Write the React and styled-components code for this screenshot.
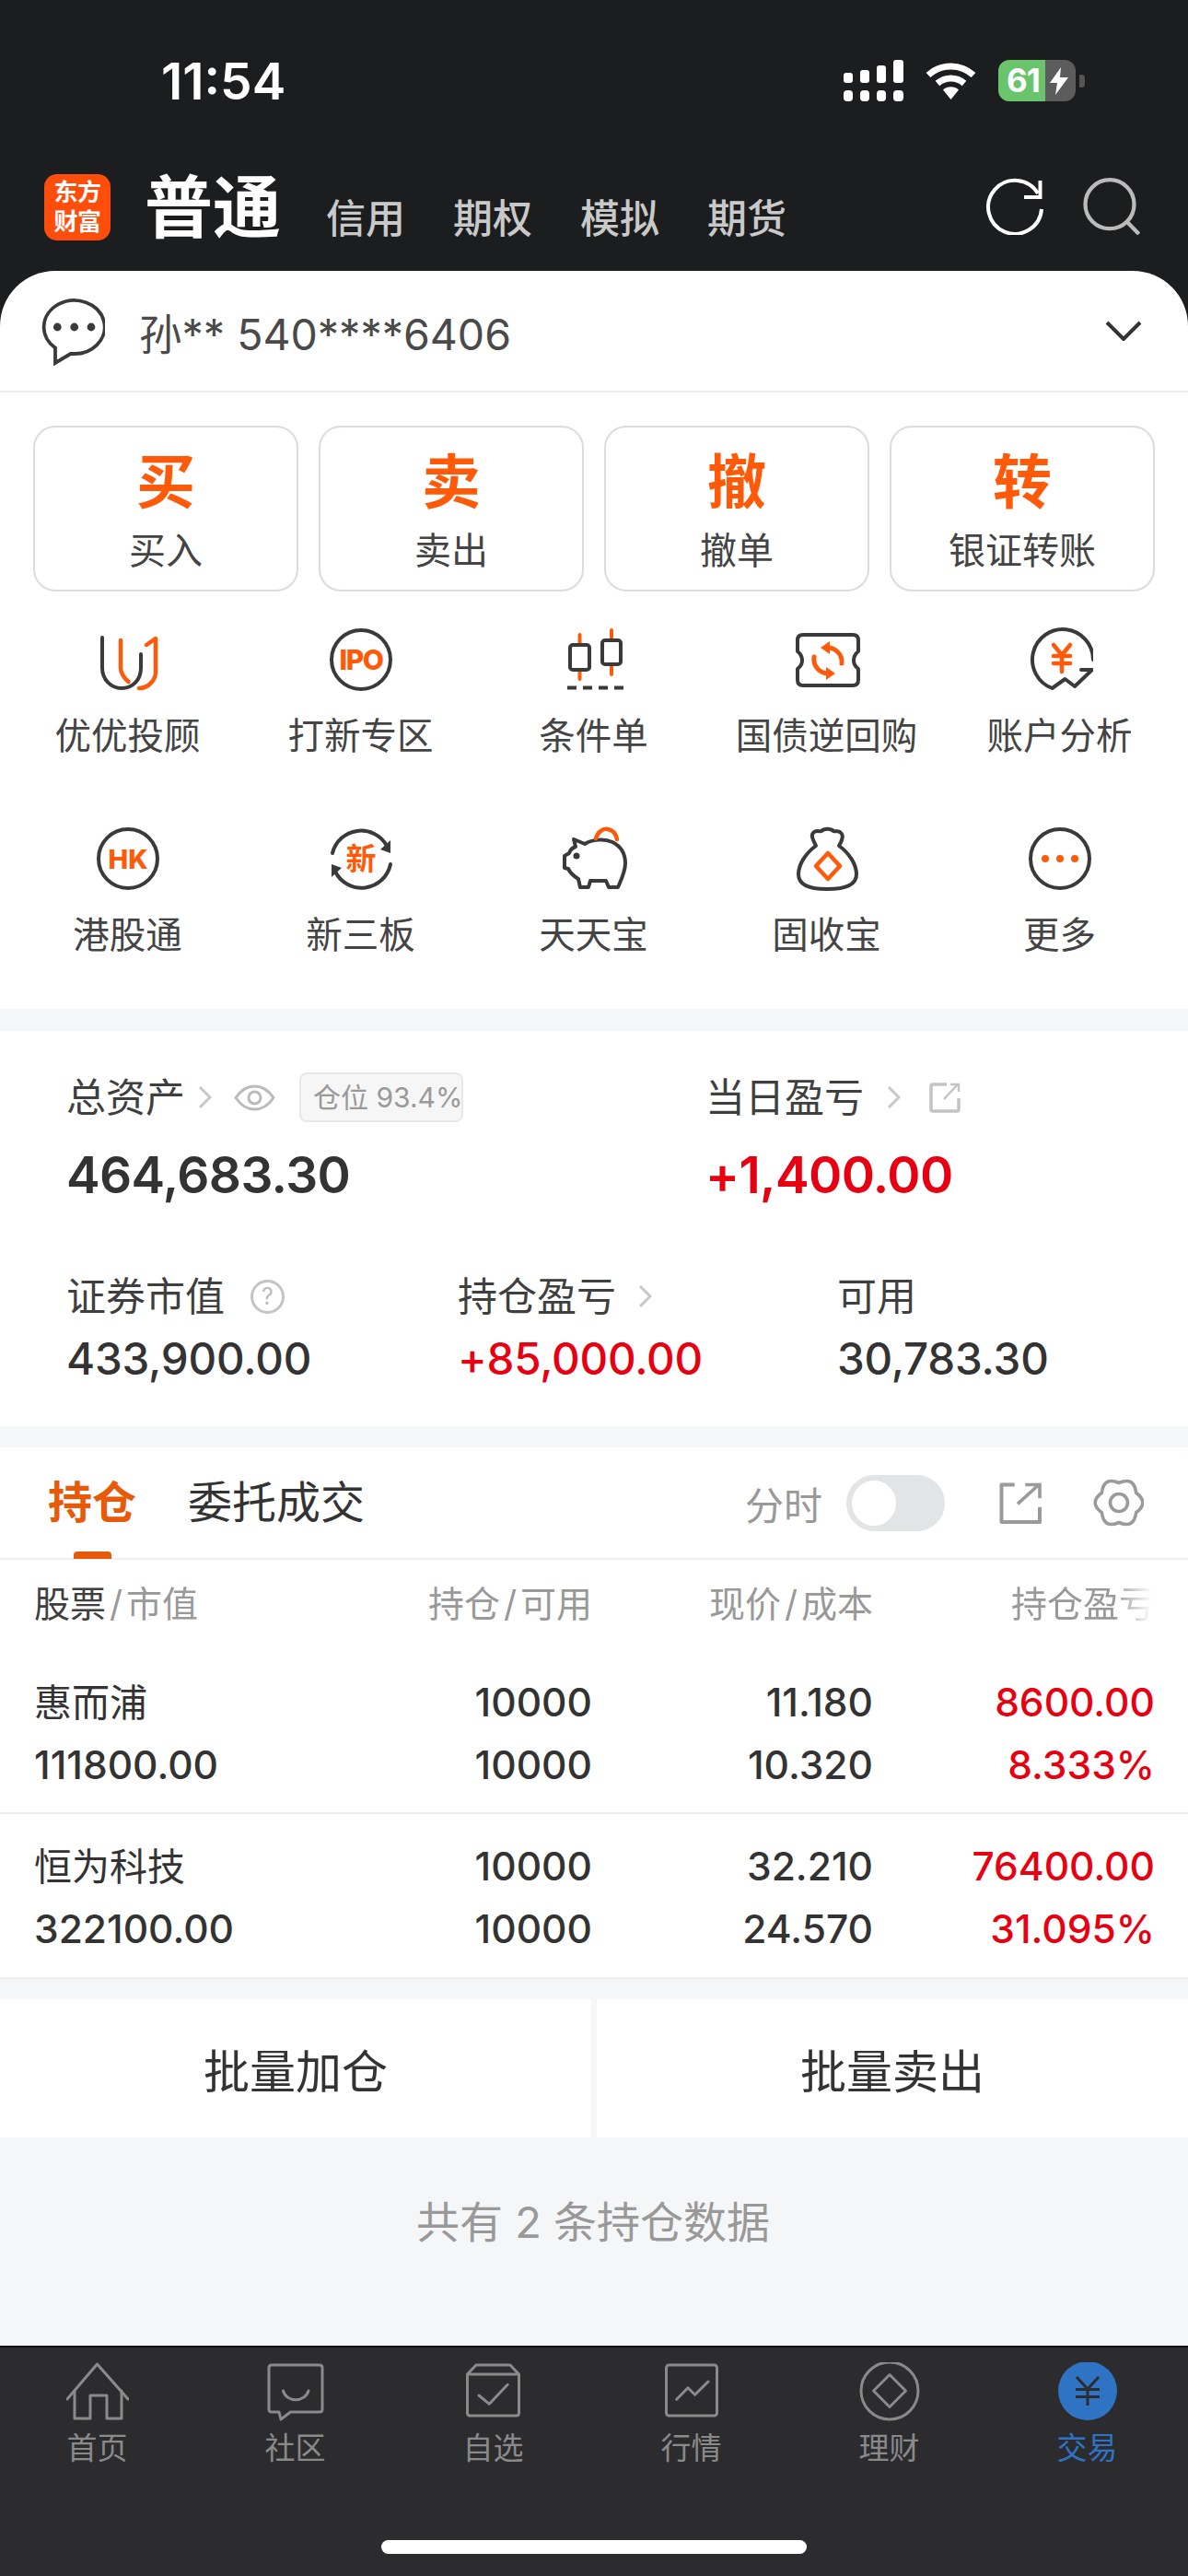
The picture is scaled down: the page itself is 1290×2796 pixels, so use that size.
import React from "react";
import styled, { createGlobalStyle } from "styled-components";

const FONT = `Inter, "Noto Sans CJK SC", "Noto Sans", sans-serif`;
const DARK = "#3a3a3a";
const ORANGE = "#ff5a0a";
const RED = "#e60012";

const Global = createGlobalStyle`
  html, body { margin: 0; padding: 0; background: #f5f6f8; }
  * { box-sizing: border-box; }
  body { font-family: ${FONT}; color: #333; }
`;

const Page = styled.div`
  width: 1290px;
  height: 2796px;
  overflow: hidden;
  display: flex;
  flex-direction: column;
  background: #f5f6f8;
`;

const Top = styled.header`
  background: #1c1d1f;
  height: 294px;
  flex: none;
`;
const StatusBar = styled.div`
  height: 175px;
  display: flex;
  align-items: center;
  justify-content: space-between;
  padding: 0 112px 0 175px;
`;
const Clock = styled.span`
  font-size: 55px;
  font-weight: 600;
  color: #fff;
`;
const StatusIcons = styled.div`
  display: flex;
  align-items: center;
  gap: 23px;
`;
const Battery = styled.div`
  display: flex;
  width: 84px;
  height: 45px;
  border-radius: 12px;
  overflow: hidden;
`;
const BatteryFill = styled.div`
  width: 51px;
  background: #69c46c;
  color: #fff;
  font-size: 35px;
  font-weight: 700;
  line-height: 45px;
  padding-left: 9px;
  letter-spacing: -1px;
`;
const BatteryRest = styled.div`
  flex: 1;
  background: #5c5c5c;
  display: flex;
  align-items: center;
  padding-left: 5px;
`;
const BatteryWrap = styled.div`
  display: flex;
  align-items: center;
  gap: 4px;
`;
const BatteryCap = styled.div`
  width: 6px;
  height: 14px;
  border-radius: 0 4px 4px 0;
  background: #555;
`;

const Nav = styled.nav`
  height: 119px;
  display: flex;
  align-items: flex-start;
  padding: 14px 52px 0 48px;
`;
const Logo = styled.div`
  width: 72px;
  height: 72px;
  border-radius: 14px;
  background: #ff4e0c;
  color: #fff;
  font-size: 26px;
  font-weight: 700;
  line-height: 32px;
  letter-spacing: -0.5px;
  text-align: center;
  padding-top: 4px;
`;
const NavMain = styled.div`
  margin-left: 37px;
  font-size: 74px;
  font-weight: 700;
  line-height: 72px;
  color: #fff;
`;
const NavTabs = styled.div`
  display: flex;
  gap: 52px;
  margin-left: 49px;
  margin-top: 24px;
`;
const NavTab = styled.span`
  font-size: 43px;
  font-weight: 500;
  line-height: 48px;
  color: #c9c9c9;
`;
const NavActions = styled.div`
  margin-left: auto;
  display: flex;
  align-items: center;
  gap: 43px;
  margin-top: 4px;
`;

const AccountWrap = styled.div`
  background: #1c1d1f;
  flex: none;
`;
const Account = styled.div`
  height: 132px;
  background: #fff;
  border-radius: 60px 60px 0 0;
  border-bottom: 2px solid #ebebeb;
  display: flex;
  align-items: center;
  padding: 0 50px 0 42px;
`;
const AccountText = styled.span`
  margin-left: 37px;
  font-size: 46.5px;
  color: #4a4a4a;
  flex: 1;
`;

const Quick = styled.section`
  background: #fff;
  padding: 36px 36px 0;
  display: grid;
  grid-template-columns: repeat(4, 288px);
  gap: 22px;
  flex: none;
`;
const TradeButton = styled.div`
  height: 180px;
  border: 2px solid #dcdcdc;
  border-radius: 24px;
  display: flex;
  flex-direction: column;
  align-items: center;
  padding-top: 24px;
`;
const TradeChar = styled.div`
  font-size: 64px;
  font-weight: 700;
  line-height: 70px;
  color: ${ORANGE};
`;
const TradeLabel = styled.div`
  margin-top: 16px;
  font-size: 40px;
  line-height: 48px;
  color: #444;
`;

const Tools = styled.section`
  background: #fff;
  padding: 38px 12.5px 54px;
  display: grid;
  grid-template-columns: repeat(5, 253px);
  row-gap: 71px;
  flex: none;
`;
const Tool = styled.div`
  display: flex;
  flex-direction: column;
  align-items: center;
`;
const ToolLabel = styled.div`
  margin-top: 21px;
  margin-left: -1px;
  font-size: 39.5px;
  line-height: 52px;
  color: #444;
  white-space: nowrap;
`;

const Assets = styled.section`
  margin-top: 24px;
  background: #fff;
  padding: 44px 0 45px 72px;
  flex: none;
  height: 429px;
`;
const AssetRow = styled.div`
  display: grid;
  grid-template-columns: ${(p) => p.$cols};
  margin-top: ${(p) => p.$top || 0}px;
`;
const AssetLabel = styled.div`
  height: 56px;
  display: flex;
  align-items: center;
  font-size: 43px;
  line-height: 56px;
  color: #3f3f3f;
`;
const AssetValue = styled.div`
  font-size: ${(p) => (p.$large ? 55 : 47.5)}px;
  font-weight: ${(p) => (p.$large ? 600 : 500)};
  line-height: ${(p) => (p.$large ? 64 : 56)}px;
  margin-top: ${(p) => (p.$large ? 24 : 12)}px;
  color: ${(p) => (p.$up ? RED : "#333")};
  letter-spacing: ${(p) => (p.$large ? -0.6 : -0.2)}px;
`;
const PositionBadge = styled.span`
  margin-left: 26px;
  width: 178px;
  height: 54px;
  background: #f6f6f6;
  border: 2px solid #e8e8e8;
  border-radius: 8px;
  font-size: 30px;
  line-height: 50px;
  color: #999;
  padding-left: 13px;
  white-space: nowrap;
  overflow: hidden;
`;
const QuestionMark = styled.span`
  margin-left: 28px;
  width: 37px;
  height: 37px;
  border: 3px solid #c4c4c4;
  border-radius: 50%;
  color: #bbb;
  font-size: 25px;
  line-height: 31px;
  text-align: center;
`;
const Gap = styled.span`
  display: inline-flex;
  margin-left: ${(p) => p.$l}px;
`;

const Holdings = styled.section`
  margin-top: 23px;
  background: #fff;
  flex: none;
`;
const TabsBar = styled.div`
  height: 122px;
  border-bottom: 2px solid #eee;
  display: flex;
  align-items: center;
  padding: 0 48px 0 52px;
`;
const HoldTab = styled.div`
  position: relative;
  font-size: 48px;
  line-height: 60px;
  font-weight: ${(p) => (p.$active ? 700 : 400)};
  color: ${(p) => (p.$active ? "#e65a0a" : "#333")};
  margin-right: 56px;
  ${(p) =>
    p.$active &&
    `&::after {
      content: "";
      position: absolute;
      left: 28px;
      bottom: -31px;
      width: 41px;
      height: 8px;
      border-radius: 4px 4px 0 0;
      background: #e65a0a;
    }`}
`;
const TabsRight = styled.div`
  margin-left: auto;
  display: flex;
  align-items: center;
`;
const Faint = styled.span`
  font-size: 42px;
  color: #999;
`;
const Toggle = styled.div`
  margin-left: 26px;
  width: 107px;
  height: 61px;
  border-radius: 31px;
  background: #e3e4e6;
  padding: 6px;
`;
const Knob = styled.div`
  width: 48px;
  height: 49px;
  border-radius: 50%;
  background: #fff;
`;

const TableGrid = styled.div`
  display: grid;
  grid-template-columns: 306px 300px 305px 306px;
  padding: 0 36px 0 37px;
`;
const TableHead = styled(TableGrid)`
  height: 90px;
  align-items: center;
  font-size: 39px;
  color: #999;
`;
const HeadCell = styled.div`
  text-align: ${(p) => (p.$left ? "left" : "right")};
  white-space: nowrap;
  & > b { font-weight: 400; color: #3f3f3f; }
`;
const Slash = styled.span`
  margin: 0 4px;
`;
const FadeText = styled.span`
  display: inline-block;
  -webkit-mask-image: linear-gradient(to right, #000 72%, transparent 98%);
  mask-image: linear-gradient(to right, #000 72%, transparent 98%);
`;
const StockRow = styled(TableGrid)`
  padding-top: ${(p) => p.$pt}px;
  padding-bottom: ${(p) => p.$pb}px;
  border-bottom: 2px solid #eee;
`;
const Cell = styled.div`
  height: 68px;
  line-height: 68px;
  font-size: ${(p) => (p.$name ? 41 : 42.5)}px;
  font-weight: ${(p) => (p.$name ? 400 : 500)};
  text-align: ${(p) => (p.$left ? "left" : "right")};
  color: ${(p) => (p.$up ? RED : "#333")};
  white-space: nowrap;
`;

const Batch = styled.div`
  margin-top: 22px;
  display: flex;
  gap: 6px;
  flex: none;
`;
const BatchButton = styled.div`
  flex: 1;
  height: 150px;
  background: #fff;
  display: flex;
  align-items: center;
  justify-content: center;
  font-size: 50px;
  color: #333;
`;
const FooterNote = styled.div`
  flex: 1;
  padding-top: 62px;
  padding-right: 2px;
  text-align: center;
  font-size: 47px;
  line-height: 60px;
  color: #999;
`;

const TabBar = styled.footer`
  height: 250px;
  flex: none;
  background: #2c2c2e;
  border-top: 2px solid #111;
  display: flex;
  flex-direction: column;
  padding-top: 16px;
`;
const TabGrid = styled.div`
  display: grid;
  grid-template-columns: repeat(6, 215px);
  margin-left: -2px;
`;
const TabItem = styled.div`
  display: flex;
  flex-direction: column;
  align-items: center;
  color: ${(p) => (p.$active ? "#2f73c4" : "#8a8a8a")};
`;
const TabLabel = styled.div`
  margin-top: 9px;
  font-size: 33px;
  line-height: 40px;
`;
const HomeIndicator = styled.div`
  margin: auto auto 24px;
  width: 462px;
  height: 15px;
  border-radius: 8px;
  background: #fff;
`;

/* icons */
const D = { fill: "none", stroke: DARK, strokeWidth: 4, strokeLinecap: "round", strokeLinejoin: "round" };
const O = { fill: "none", stroke: ORANGE, strokeWidth: 4.5, strokeLinecap: "round", strokeLinejoin: "round" };
const ToolSvg = ({ children }) => (
  <svg width="72" height="72" viewBox="0 0 72 72">{children}</svg>
);
const IconText = ({ children, size, weight = 800, y = 46, spacing = 0, family = "Inter" }) => (
  <text x="36" y={y} textAnchor="middle" fontFamily={family} fontSize={size} fontWeight={weight} fill={ORANGE} letterSpacing={spacing}>
    {children}
  </text>
);

const icons = {
  youyou: (
    <ToolSvg>
      <path {...D} d="M8 12V45C8 58 18 67 29 67C41 67 50 58 50 45V30" />
      <path {...O} d="M28 15V45C28 50 32 56 36.5 60" />
      <path {...O} d="M56 20L66 13V47C67 58 58 67 48 67" />
    </ToolSvg>
  ),
  ipo: (
    <ToolSvg>
      <circle {...D} cx="36" cy="36" r="32" />
      <IconText size={30} y={47} spacing={-1.5}>IPO</IconText>
    </ToolSvg>
  ),
  candle: (
    <ToolSvg>
      <path {...O} strokeWidth="4" d="M20.5 9V20M20.5 47V57M55 4V15M55 41V52" />
      <rect {...D} x="10" y="20" width="21" height="27" rx="3" />
      <rect {...D} x="45" y="15" width="20" height="26" rx="3" />
      <path {...D} strokeDasharray="10 7" strokeLinecap="butt" d="M7 66.5H68" />
    </ToolSvg>
  ),
  ticket: (
    <ToolSvg>
      <path {...D} d="M10 9H64Q70 9 70 15V27Q65 31 65 37Q65 42 70 46V58Q70 64 64 64H10Q4 64 4 58V46Q9 42 9 37Q9 31 4 27V15Q4 9 10 9Z" />
      <path {...O} strokeWidth="5" d="M52 40A15.5 15.5 0 0 0 36 23" />
      <path d="M39 16L29 23L39 30Z" fill={ORANGE} />
      <path {...O} strokeWidth="5" d="M22 33A15.5 15.5 0 0 0 36 51" />
      <path d="M35 44L45 51L35 58Z" fill={ORANGE} />
    </ToolSvg>
  ),
  yuan: (
    <ToolSvg>
      <path {...D} d="M72 36A33 33 0 1 0 27.5 67L41.5 57L52 65L71 47H59" />
      <path {...O} d="M29 20L38 31L47 20M29 32H47M29 40H47M38 31V49" />
    </ToolSvg>
  ),
  hk: (
    <ToolSvg>
      <circle {...D} cx="36" cy="36" r="32" />
      <IconText size={29} y={46.5}>HK</IconText>
    </ToolSvg>
  ),
  xin: (
    <ToolSvg>
      <path {...D} d="M5 30A32 32 0 0 1 64 22" />
      <path d="M68 16L68 30L57 26Z" fill={DARK} />
      <path {...D} d="M68 42A32 32 0 0 1 8 50" />
      <path d="M4 56L4 42L15 46Z" fill={DARK} />
      <IconText size={33} weight={700} y={48} family={`"Noto Sans CJK SC"`}>新</IconText>
    </ToolSvg>
  ),
  pig: (
    <ToolSvg>
      <path {...D} d="M14 15L26 20C34 15 47 14 56 18C66 23 70 32 70 41C70 50 66 58 62 67H52L49 60H32L30 67H21L19 58C14 55 10 51 8 47L4 46V33L9 30C10 27 13 24 16 23Z" />
      <circle cx="17" cy="33" r="3.5" fill={DARK} />
      <path {...O} d="M38 14C40 6 47 3 51 4C57 5 60 10 61 15" />
    </ToolSvg>
  ),
  bag: (
    <ToolSvg>
      <path {...D} d="M24 22C20 14 18 10 22 7C26 5 28 7 30 6C33 3 40 3 43 6C46 7 49 5 51 8C55 11 52 17 49 22C60 30 68 42 68 53C68 63 58 69 36 69C14 69 5 63 5 53C5 42 13 30 24 22Z" />
      <path {...O} d="M37 30L50 44L37 58L24 44Z" />
    </ToolSvg>
  ),
  more: (
    <ToolSvg>
      <circle {...D} cx="36" cy="36" r="32" />
      <circle cx="20" cy="36" r="4" fill={ORANGE} />
      <circle cx="36" cy="36" r="4" fill={ORANGE} />
      <circle cx="52" cy="36" r="4" fill={ORANGE} />
    </ToolSvg>
  ),
};

const G = { fill: "none", stroke: "#8a8a8a", strokeWidth: 3, strokeLinecap: "round", strokeLinejoin: "round" };
const TabSvg = ({ children }) => (
  <svg width="68" height="64" viewBox="0 0 68 64">{children}</svg>
);
const tabIcons = {
  home: (
    <TabSvg>
      <path {...G} d="M1 40L33.5 2L67 40" />
      <path {...G} d="M9 31V61H26V36H44V61H60V31" />
    </TabSvg>
  ),
  chat: (
    <TabSvg>
      <path {...G} d="M8 3H60Q63 3 63 6V51Q63 54 60 54H28.5L18 62L16 54H8Q5 54 5 51V6Q5 3 8 3Z" />
      <path {...G} d="M20.5 31C24 44 44 44 48 31" />
    </TabSvg>
  ),
  star: (
    <TabSvg>
      <path {...G} d="M15 3H52L61.5 13V55Q61.5 58 58.5 58H8.5Q5.5 58 5.5 55V13ZM5.5 13H61.5" />
      <path {...G} d="M18 36L29.3 45.3L49.2 24.3" />
    </TabSvg>
  ),
  market: (
    <TabSvg>
      <rect {...G} x="6.5" y="3" width="55" height="55" rx="3" />
      <path {...G} d="M17.7 40.3L30 27.7L37.6 35.3L52 21" />
    </TabSvg>
  ),
  wealth: (
    <TabSvg>
      <circle {...G} cx="34" cy="31" r="31" />
      <path {...G} d="M34 13.5L51.5 31L34 48.5L16.5 31Z" />
    </TabSvg>
  ),
  trade: (
    <TabSvg>
      <circle cx="34" cy="31" r="32" fill="#2f73c4" />
      <path fill="none" stroke="#2c2c2e" strokeWidth="3" d="M22 16L34 29L46 16M21 29.5H47M21 37.5H47M34 29V47" />
    </TabSvg>
  ),
};

const Chevron = () => (
  <svg width="15" height="24" viewBox="0 0 15 24">
    <path d="M2 1L13 12L2 23" fill="none" stroke="#c8c8c8" strokeWidth="3" />
  </svg>
);
const Eye = () => (
  <svg width="45" height="29" viewBox="0 0 45 29">
    <path d="M2 14.5C9 4 16 2 22.5 2C29 2 36 4 43 14.5C36 25 29 27 22.5 27C16 27 9 25 2 14.5Z" fill="none" stroke="#bbb" strokeWidth="3" />
    <circle cx="22.5" cy="14.5" r="6.5" fill="none" stroke="#bbb" strokeWidth="3" />
  </svg>
);
const ShareSmall = () => (
  <svg width="34" height="33" viewBox="0 0 34 33">
    <path d="M19 2H4Q2 2 2 4V29Q2 31 4 31H30Q32 31 32 29V17" fill="none" stroke="#c4c4c4" strokeWidth="3.5" />
    <path d="M16 18L31 2M23 2H32V10" fill="none" stroke="#c4c4c4" strokeWidth="2.5" />
  </svg>
);

const Signal = () => (
  <svg width="65" height="45" viewBox="0 0 65 45" fill="#fff">
    <rect x="0" y="14" width="10" height="11" rx="3" />
    <rect x="18" y="11" width="10" height="14" rx="3" />
    <rect x="36" y="6" width="10" height="19" rx="3" />
    <rect x="54" y="0" width="11" height="25" rx="3" />
    <rect x="0" y="33" width="10" height="12" rx="4" />
    <rect x="18" y="33" width="10" height="12" rx="4" />
    <rect x="36" y="33" width="10" height="12" rx="4" />
    <rect x="54" y="33" width="11" height="12" rx="4" />
  </svg>
);
const Wifi = () => (
  <svg width="57" height="41" viewBox="0 0 57 41">
    <path d="M4 14.5A36 36 0 0 1 53 14.5" fill="none" stroke="#fff" strokeWidth="7" />
    <path d="M14 23.5A22 22 0 0 1 43 23.5" fill="none" stroke="#fff" strokeWidth="7" />
    <path d="M20 30.5A13 13 0 0 1 37 30.5L28.5 41Z" fill="#fff" />
  </svg>
);
const Bolt = () => (
  <svg width="20" height="30" viewBox="0 0 20 30">
    <path d="M12 0L0 17H8L6 30L20 11H11Z" fill="#fff" />
  </svg>
);
const Refresh = () => (
  <svg width="62" height="62" viewBox="0 0 62 62">
    <path d="M60 34A29 29 0 1 1 56 17" fill="none" stroke="#fff" strokeWidth="4" />
    <path d="M58.5 3V21H41" fill="none" stroke="#fff" strokeWidth="4" />
  </svg>
);
const Search = () => (
  <svg width="62" height="62" viewBox="0 0 62 62">
    <circle cx="29" cy="28.7" r="26.5" fill="none" stroke="#bbb" strokeWidth="4.3" />
    <path d="M47 47L60.7 61" fill="none" stroke="#bbb" strokeWidth="4.3" />
  </svg>
);
const ChatBubble = () => (
  <svg width="72" height="76" viewBox="0 0 72 76">
    <path d="M18 56.6A33 29 0 1 1 35 62.8L18 73Z" fill="none" stroke={DARK} strokeWidth="3.8" strokeLinejoin="miter" />
    <circle cx="20.3" cy="34" r="4.4" fill={DARK} />
    <circle cx="38.7" cy="34" r="4.4" fill={DARK} />
    <circle cx="57" cy="34" r="4.4" fill={DARK} />
  </svg>
);
const ChevronDown = () => (
  <svg width="40" height="22" viewBox="0 0 40 22">
    <path d="M2 2L20 20L38 2" fill="none" stroke="#333" strokeWidth="4" />
  </svg>
);
const ShareLarge = () => (
  <svg width="47" height="46" viewBox="0 0 47 46">
    <path d="M17.7 3.5H3.5V44H45V27.7" fill="none" stroke="#9a9a9a" strokeWidth="4" strokeLinejoin="round" />
    <path d="M21 24.3L44 3.5M29.3 3.5H45V18.3" fill="none" stroke="#9a9a9a" strokeWidth="3.6" />
  </svg>
);

/* six-lobed cog outline: a dent every 60° with a rounded lobe between */
const gearPath = (() => {
  const cx = 28;
  const cy = 26;
  const pt = (r, deg) => {
    const a = (deg * Math.PI) / 180;
    return `${(cx + r * Math.cos(a)).toFixed(1)} ${(cy + r * Math.sin(a)).toFixed(1)}`;
  };
  let d = `M${pt(21.5, -30)}`;
  for (let i = 0; i < 6; i += 1) {
    const lobe = i * 60;
    d += `Q${pt(33, lobe)} ${pt(21.5, lobe + 30)}`;
  }
  return `${d}Z`;
})();
const Gear = () => (
  <svg width="55" height="52" viewBox="0 0 55 52">
    <path d={gearPath} fill="none" stroke="#9a9a9a" strokeWidth="3.6" strokeLinejoin="round" />
    <circle cx="28" cy="26" r="9.5" fill="none" stroke="#9a9a9a" strokeWidth="3.6" />
  </svg>
);

const trades = [
  ["买", "买入"],
  ["卖", "卖出"],
  ["撤", "撤单"],
  ["转", "银证转账"],
];
const tools = [
  ["youyou", "优优投顾"],
  ["ipo", "打新专区"],
  ["candle", "条件单"],
  ["ticket", "国债逆回购"],
  ["yuan", "账户分析"],
  ["hk", "港股通"],
  ["xin", "新三板"],
  ["pig", "天天宝"],
  ["bag", "固收宝"],
  ["more", "更多"],
];
const stocks = [
  { name: "惠而浦", value: "111800.00", hold: "10000", avail: "10000", price: "11.180", cost: "10.320", pl: "8600.00", pct: "8.333%", pt: 31, pb: 17 },
  { name: "恒为科技", value: "322100.00", hold: "10000", avail: "10000", price: "32.210", cost: "24.570", pl: "76400.00", pct: "31.095%", pt: 23, pb: 18 },
];
const tabs = [
  ["home", "首页"],
  ["chat", "社区"],
  ["star", "自选"],
  ["market", "行情"],
  ["wealth", "理财"],
  ["trade", "交易", true],
];

export default function App() {
  return (
    <Page>
      <Global />
      <Top>
        <StatusBar>
          <Clock>11:54</Clock>
          <StatusIcons>
            <Signal />
            <Wifi />
            <BatteryWrap>
              <Battery>
                <BatteryFill>61</BatteryFill>
                <BatteryRest>
                  <Bolt />
                </BatteryRest>
              </Battery>
              <BatteryCap />
            </BatteryWrap>
          </StatusIcons>
        </StatusBar>
        <Nav>
          <Logo>
            东方
            <br />
            财富
          </Logo>
          <NavMain>普通</NavMain>
          <NavTabs>
            {["信用", "期权", "模拟", "期货"].map((t) => (
              <NavTab key={t}>{t}</NavTab>
            ))}
          </NavTabs>
          <NavActions>
            <Refresh />
            <Search />
          </NavActions>
        </Nav>
      </Top>
      <AccountWrap>
        <Account>
          <ChatBubble />
          <AccountText>孙** 540****6406</AccountText>
          <ChevronDown />
        </Account>
      </AccountWrap>
      <Quick>
        {trades.map(([c, l]) => (
          <TradeButton key={c}>
            <TradeChar>{c}</TradeChar>
            <TradeLabel>{l}</TradeLabel>
          </TradeButton>
        ))}
      </Quick>
      <Tools>
        {tools.map(([k, l]) => (
          <Tool key={k}>
            {icons[k]}
            <ToolLabel>{l}</ToolLabel>
          </Tool>
        ))}
      </Tools>
      <Assets>
        <AssetRow $cols="694px 1fr">
          <div>
            <AssetLabel>
              总资产
              <Gap $l={14}><Chevron /></Gap>
              <Gap $l={24}><Eye /></Gap>
              <PositionBadge>仓位 93.4%</PositionBadge>
            </AssetLabel>
            <AssetValue $large>464,683.30</AssetValue>
          </div>
          <div>
            <AssetLabel>
              当日盈亏
              <Gap $l={25}><Chevron /></Gap>
              <Gap $l={31}><ShareSmall /></Gap>
            </AssetLabel>
            <AssetValue $large $up>+1,400.00</AssetValue>
          </div>
        </AssetRow>
        <AssetRow $cols="425px 412px 1fr" $top={72}>
          <div>
            <AssetLabel>
              证券市值
              <QuestionMark>?</QuestionMark>
            </AssetLabel>
            <AssetValue>433,900.00</AssetValue>
          </div>
          <div>
            <AssetLabel>
              持仓盈亏
              <Gap $l={24}><Chevron /></Gap>
            </AssetLabel>
            <AssetValue $up>+85,000.00</AssetValue>
          </div>
          <div>
            <AssetLabel>可用</AssetLabel>
            <AssetValue>30,783.30</AssetValue>
          </div>
        </AssetRow>
      </Assets>
      <Holdings>
        <TabsBar>
          <HoldTab $active>持仓</HoldTab>
          <HoldTab>委托成交</HoldTab>
          <TabsRight>
            <Faint>分时</Faint>
            <Toggle>
              <Knob />
            </Toggle>
            <Gap $l={58}><ShareLarge /></Gap>
            <Gap $l={56}><Gear /></Gap>
          </TabsRight>
        </TabsBar>
        <TableHead>
          <HeadCell $left><b>股票</b><Slash>/</Slash>市值</HeadCell>
          <HeadCell>持仓<Slash>/</Slash>可用</HeadCell>
          <HeadCell>现价<Slash>/</Slash>成本</HeadCell>
          <HeadCell><FadeText>持仓盈亏</FadeText></HeadCell>
        </TableHead>
        {stocks.map((s) => (
          <StockRow key={s.name} $pt={s.pt} $pb={s.pb}>
            <Cell $left $name>{s.name}</Cell>
            <Cell>{s.hold}</Cell>
            <Cell>{s.price}</Cell>
            <Cell $up>{s.pl}</Cell>
            <Cell $left>{s.value}</Cell>
            <Cell>{s.avail}</Cell>
            <Cell>{s.cost}</Cell>
            <Cell $up>{s.pct}</Cell>
          </StockRow>
        ))}
      </Holdings>
      <Batch>
        <BatchButton>批量加仓</BatchButton>
        <BatchButton>批量卖出</BatchButton>
      </Batch>
      <FooterNote>共有 2 条持仓数据</FooterNote>
      <TabBar>
        <TabGrid>
          {tabs.map(([k, l, a]) => (
            <TabItem key={k} $active={a}>
              {tabIcons[k]}
              <TabLabel>{l}</TabLabel>
            </TabItem>
          ))}
        </TabGrid>
        <HomeIndicator />
      </TabBar>
    </Page>
  );
}
